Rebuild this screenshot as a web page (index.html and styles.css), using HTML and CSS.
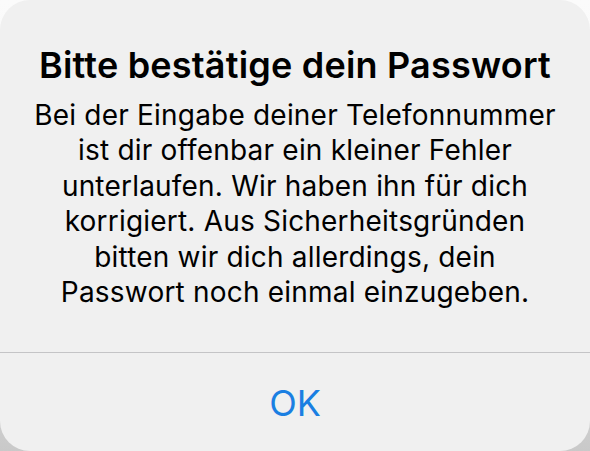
FILE: index.html
```html
<!DOCTYPE html>
<html lang="de">
<head>
<meta charset="utf-8">
<link rel="stylesheet" href="styles.css">
</head>
<body>
<div class="page">
  <div class="alert">
    <div class="content">
      <h1 class="title">Bitte bestätige dein Passwort</h1>
      <p class="message">Bei der Eingabe deiner Telefonnummer<br>ist dir offenbar ein kleiner Fehler<br>unterlaufen. Wir haben ihn für dich<br>korrigiert. Aus Sicherheitsgründen<br>bitten wir dich allerdings, dein<br>Passwort noch einmal einzugeben.</p>
    </div>
    <div class="actions">
      <button class="btn">OK</button>
    </div>
  </div>
</div>
</body>
</html>
```
FILE: styles.css
```css
html, body {
  margin: 0;
  padding: 0;
  width: 590px;
  height: 451px;
  overflow: hidden;
}
.page {
  width: 590px;
  height: 451px;
  background: linear-gradient(to bottom, #fbfbfb 0%, #f6f6f6 40%, #c9c9c9 100%);
}
.alert {
  width: 590px;
  height: 451px;
  background: #f0f0f0;
  border-radius: 30px;
  display: flex;
  flex-direction: column;
  font-family: Inter, "Noto Sans", sans-serif;
}
.content {
  height: 353px;
  box-sizing: border-box;
  padding-top: 44px;
  border-bottom: 1.5px solid #c4c4c6;
  text-align: center;
}
.title {
  margin: 0;
  font-size: 36px;
  font-weight: 600;
  line-height: 42px;
  color: #000;
  letter-spacing: 0.2px;
}
.message {
  margin: 12px 0 0;
  font-size: 28px;
  line-height: 35.4px;
  color: #000;
  font-weight: 400;
  letter-spacing: 0.2px;
}
.actions {
  flex: 1;
  display: flex;
  align-items: center;
  justify-content: center;
}
.btn {
  border: none;
  background: none;
  font-family: Inter, "Noto Sans", sans-serif;
  font-size: 36px;
  color: #1a7fe2;
  padding: 0;
  margin-top: 2px;
}
```
